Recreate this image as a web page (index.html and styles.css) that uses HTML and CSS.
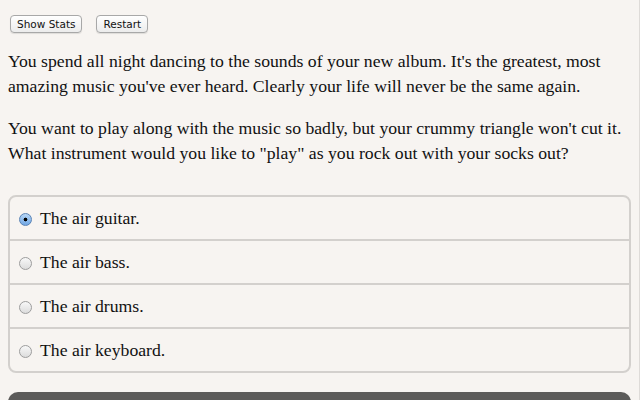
FILE: index.html
```html
<!DOCTYPE html>
<html lang="en">
<head>
    <meta charset="UTF-8">
    <title>Air Band</title>
    <link rel="stylesheet" href="styles.css">
</head>
<body>

<div class="toolbar">
    <button class="btn">Show Stats</button>
    <button class="btn">Restart</button>
</div>

<div class="story">
    <p>You spend all night dancing to the sounds of your new album. It's the greatest, most amazing music you've ever heard. Clearly your life will never be the same again.</p>
    <p>You want to play along with the music so badly, but your crummy triangle won't cut it. What instrument would you like to "play" as you rock out with your socks out?</p>
</div>

<div class="choices">
    <label class="choice"><input type="radio" name="pick" checked> <span>The air guitar.</span></label>
    <label class="choice"><input type="radio" name="pick"> <span>The air bass.</span></label>
    <label class="choice"><input type="radio" name="pick"> <span>The air drums.</span></label>
    <label class="choice"><input type="radio" name="pick"> <span>The air keyboard.</span></label>
</div>

<div class="nextBar"></div>

</body>
</html>
```

FILE: styles.css
```css
html {
    background: #f7f4f1;
}
body {
    margin: 0;
    padding: 15px 8px 0 8px;
    font-family: "Liberation Serif", serif;
    color: #111;
    border-right: 1px solid #dedbd8;
    height: 400px;
    overflow: hidden;
    box-sizing: border-box;
}

.toolbar {
    display: flex;
    gap: 14px;
    padding-left: 2px;
}
.btn {
    font-family: "DejaVu Sans", sans-serif;
    font-size: 10.5px;
    color: #111;
    height: 18px;
    padding: 0 6px;
    background: linear-gradient(#ffffff, #ececec);
    border: 1px solid #a8a8a8;
    border-radius: 4px;
    box-shadow: 0 1px 1px rgba(0,0,0,0.1);
}

.story {
    font-size: 17.7px;
    line-height: 24.5px;
    margin-right: -3px;
}
.story p {
    margin: 18px 0 0 0;
}
.story p:first-child {
    margin-top: 16px;
}

.choices {
    margin-top: 30px;
    border: 2px solid #d3d0cd;
    border-radius: 8px;
}
.choice {
    display: flex;
    align-items: center;
    height: 42px;
    padding-left: 9px;
    font-size: 17.7px;
    border-top: 2px solid #d3d0cd;
}
.choice:first-child {
    border-top: none;
}
.choice input {
    appearance: none;
    width: 13px;
    height: 13px;
    margin: 2px 8px 0 0;
    border-radius: 50%;
    border: 1px solid #9d9d9d;
    background: linear-gradient(#f8f8f8, #dcdcdc);
    box-sizing: border-box;
}
.choice input:checked {
    border-color: #5a83b5;
    background: radial-gradient(circle, #000 0 1.6px, transparent 2.2px),
                linear-gradient(#b7d6f5, #6fa6e4);
}

.nextBar {
    margin-top: 19px;
    height: 20px;
    background: #5c5b5a;
    border-radius: 10px 10px 0 0;
}
```
